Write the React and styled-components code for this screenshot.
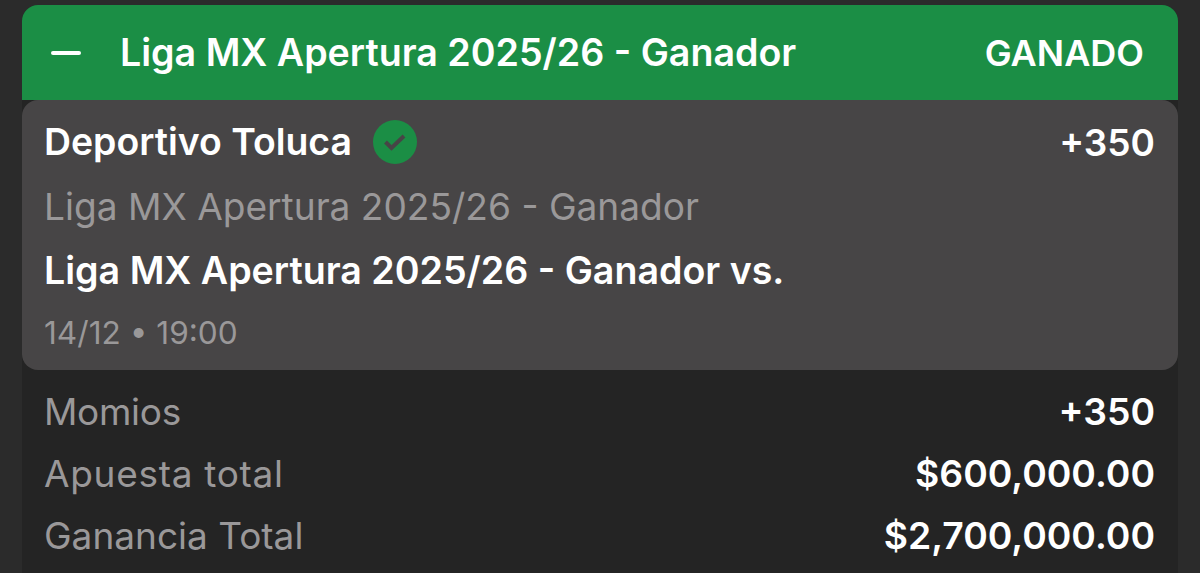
import styled, { createGlobalStyle } from "styled-components";

const GlobalStyle = createGlobalStyle`
  html, body {
    margin: 0;
    height: 100%;
    background: #2b2b2b;
    overflow: hidden;
  }
`;

const Page = styled.div`
  width: 1200px;
  height: 573px;
  box-sizing: border-box;
  padding: 5px 22px 0;
  overflow: hidden;
  font-family: Inter, Roboto, "Liberation Sans", sans-serif;
  color: #fff;
`;

const Card = styled.div`
  background: #242424;
  height: 568px;
  border-radius: 16px 16px 0 0;
`;

const Header = styled.div`
  height: 95px;
  box-sizing: border-box;
  display: flex;
  align-items: center;
  padding: 0 34px 0 29px;
  background: #1b8e45;
  border-radius: 16px 16px 0 0;
`;

const Collapse = styled.span`
  width: 30px;
  height: 4px;
  border-radius: 2px;
  background: #fff;
  margin-right: 39px;
`;

const League = styled.div`
  flex: 1;
  font-size: 37.6px;
  font-weight: 600;
`;

const Status = styled.div`
  font-size: 36px;
  font-weight: 600;
`;

const Selection = styled.div`
  height: 270px;
  box-sizing: border-box;
  padding: 19px 23px 0 22px;
  background: #474546;
  border-radius: 16px;
`;

const SpreadRow = styled.div`
  display: flex;
  align-items: center;
  justify-content: space-between;
`;

const Team = styled.div`
  display: flex;
  align-items: center;
  gap: 21px;
  font-size: 37.4px;
  font-weight: 600;
  line-height: 46px;
`;

const CheckBadge = styled.svg`
  width: 44px;
  height: 44px;
`;

const Odds = styled.div`
  font-size: 37px;
  font-weight: 600;
`;

const Muted = styled.div`
  color: #9a9899;
  font-size: 37.1px;
  line-height: 46px;
  margin-top: ${(p) => p.$top || 0}px;
`;

const EventName = styled.div`
  font-size: 37.6px;
  font-weight: 600;
  line-height: 46px;
  margin-top: 18px;
`;

const DateLine = styled.div`
  color: #9a9899;
  font-size: 31.6px;
  line-height: 40px;
  margin-top: 19px;
`;

const Summary = styled.div`
  padding: 19px 23px 0 22px;
  display: flex;
  flex-direction: column;
  gap: 16px;
`;

const SummaryLabel = styled.span`
  color: #9a9899;
  font-size: 37px;
  line-height: 46px;
  letter-spacing: ${(p) => p.$tracking || 0}px;
`;

const SummaryValue = styled.span`
  font-size: 37.3px;
  font-weight: 600;
  line-height: 46px;
`;

const rows = [
  { label: "Momios", value: "+350", tracking: -0.3 },
  { label: "Apuesta total", value: "$600,000.00", tracking: 0.7 },
  { label: "Ganancia Total", value: "$2,700,000.00" },
];

export default function App() {
  return (
    <>
      <GlobalStyle />
      <Page>
        <Card>
          <Header>
            <Collapse />
            <League>Liga MX Apertura 2025/26 - Ganador</League>
            <Status>GANADO</Status>
          </Header>
          <Selection>
            <SpreadRow>
              <Team>
                Deportivo Toluca
                <CheckBadge viewBox="0 0 44 44">
                  <circle cx="22" cy="22" r="22" fill="#1b8e45" />
                  <path d="M12.5 22l6 6L31 16" fill="none" stroke="#474546" strokeWidth="4" />
                </CheckBadge>
              </Team>
              <Odds>+350</Odds>
            </SpreadRow>
            <Muted $top={19}>Liga MX Apertura 2025/26 - Ganador</Muted>
            <EventName>Liga MX Apertura 2025/26 - Ganador vs.</EventName>
            <DateLine>14/12 • 19:00</DateLine>
          </Selection>
          <Summary>
            {rows.map((row) => (
              <SpreadRow key={row.label}>
                <SummaryLabel $tracking={row.tracking}>{row.label}</SummaryLabel>
                <SummaryValue>{row.value}</SummaryValue>
              </SpreadRow>
            ))}
          </Summary>
        </Card>
      </Page>
    </>
  );
}
